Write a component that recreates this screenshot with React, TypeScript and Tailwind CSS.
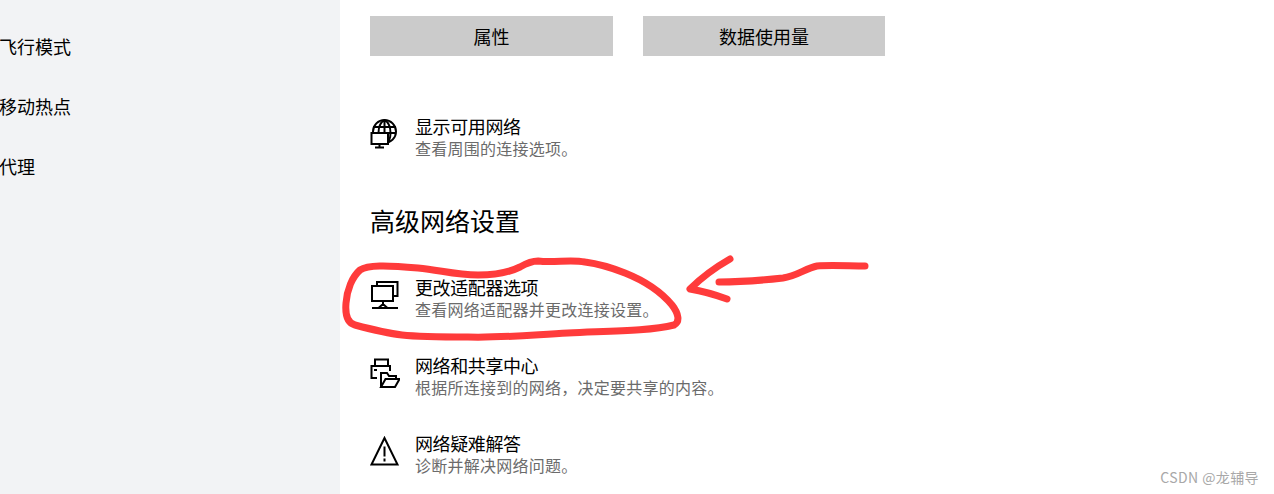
const sideLinks = ["飞行模式", "移动热点", "代理"];

function GlobeIcon() {
  return (
    <svg width="30" height="30" viewBox="0 0 30 30" fill="none" stroke="#000" strokeWidth="2">
      <circle cx="14.500" cy="12.500" r="11.500" />
      <path d="M3 8h23M3 14h23M14.500 1v13M8.500 14C8.500 8 11 3 14.500 1c3.500 2 6 7 6 13 0 3-.5 5.500-1.500 8" />
      <rect x="1.500" y="14" width="16.500" height="11" fill="#fff" />
      <path d="M9.500 25v3M5 28.500h9" />
    </svg>
  );
}

function AdapterIcon() {
  return (
    <svg width="30" height="30" viewBox="0 0 30 30" fill="none" stroke="#000" strokeWidth="2">
      <path d="M7 6V2h20.500v14H23" />
      <rect x="2" y="6" width="21" height="15" fill="#fff" />
      <path d="M13 21v3M8.500 28l4.500-4 4.500 4zM2 28h7M17 28h11" />
    </svg>
  );
}

function SharingIcon() {
  return (
    <svg width="30" height="30" viewBox="0 0 30 30" fill="none" stroke="#000" strokeWidth="2">
      <path d="M5 8V1.500h13V8" />
      <path d="M7 20H1.500V8H20v5" />
      <path d="M4 12h3" />
      <path d="M11 29V15h6l2 3h7v3" />
      <path d="M11 29l4.500-8h14L25 29z" fill="#fff" />
    </svg>
  );
}

function WarningIcon() {
  return (
    <svg width="30" height="30" viewBox="0 0 30 30" fill="none" stroke="#000" strokeWidth="2">
      <path d="M14.500 2 1.500 28.500h26z" />
      <path d="M14.500 10.500v10M14.500 22.500v3" />
    </svg>
  );
}

const advanced = [
  { icon: AdapterIcon, title: "更改适配器选项", desc: "查看网络适配器并更改连接设置。" },
  { icon: SharingIcon, title: "网络和共享中心", desc: "根据所连接到的网络，决定要共享的内容。" },
  { icon: WarningIcon, title: "网络疑难解答", desc: "诊断并解决网络问题。" },
];

function Row({ icon: Icon, title, desc }: { icon: () => React.ReactNode; title: string; desc: string }) {
  return (
    <div className="flex h-[44px] items-start">
      <div className="mt-[4px] w-[45px] shrink-0">
        <Icon />
      </div>
      <div>
        <div className="text-[18px] leading-[22px] tracking-[-0.4px] text-black">{title}</div>
        <div className="text-[16px] leading-[22px] tracking-[0.25px] text-[#6b6b6b]">{desc}</div>
      </div>
    </div>
  );
}

export default function App() {
  return (
    <div className="relative flex h-[494px] w-[1274px] overflow-hidden bg-white font-['Noto_Sans_CJK_SC','Noto_Sans',sans-serif]">
      <aside className="flex h-full w-[340px] shrink-0 flex-col gap-[36px] bg-[#f2f3f5] pt-[34px]">
        {sideLinks.map((link) => (
          <div key={link} className="-ml-[1px] h-[24px] text-[18px] leading-[24px] text-black">
            {link}
          </div>
        ))}
      </aside>

      <main className="pl-[30px] pt-[16px]">
        <div className="flex gap-[30px]">
          <div className="flex h-[40px] w-[243px] items-center justify-center bg-[#cbcbcb] text-[18px] text-black">属性</div>
          <div className="flex h-[40px] w-[242px] items-center justify-center bg-[#cbcbcb] text-[18px] text-black">数据使用量</div>
        </div>

        <div className="mt-[59px]">
          <Row icon={GlobeIcon} title="显示可用网络" desc="查看周围的连接选项。" />
        </div>

        <h2 className="mt-[44px] mb-[39px] h-[34px] text-[25px] leading-[34px] font-normal text-black">高级网络设置</h2>

        <div className="flex flex-col gap-[34px]">
          {advanced.map((item) => (
            <Row key={item.title} icon={item.icon} title={item.title} desc={item.desc} />
          ))}
        </div>
      </main>

      {/* hand drawn markup on top of the page */}
      <svg className="pointer-events-none absolute inset-0" width="1274" height="494" fill="none" stroke="#ff3b3b" strokeWidth="7" strokeLinecap="round" strokeLinejoin="round">
        <path d="M538 261C555 263 570 259 585 262C600 264 610 267 625 273C645 281 662 293 672 305C679 314 680 322 674 325C650 331 610 331 568 333C530 335 500 338 468 337C440 337 420 337 402 335C385 333 370 329 355 325C347 323 345 315 346 303C347 290 352 277 360 270C368 265 385 265 418 268C440 270 455 275 478 275C495 275 510 272 520 267C527 263 532 261 538 261Z" />
        <path d="M719 282C740 282 765 280 783 278C797 276 806 268 817 266C830 265 850 266 865 266" />
        <path d="M730 259C716 267 702 277 690 289C702 291 716 295 727 299" />
      </svg>

      <div className="absolute right-[15px] top-[467px] text-[14px] leading-[20px] tracking-[0.4px] text-[#a8a8a8]">CSDN @龙辅导</div>
    </div>
  );
}
